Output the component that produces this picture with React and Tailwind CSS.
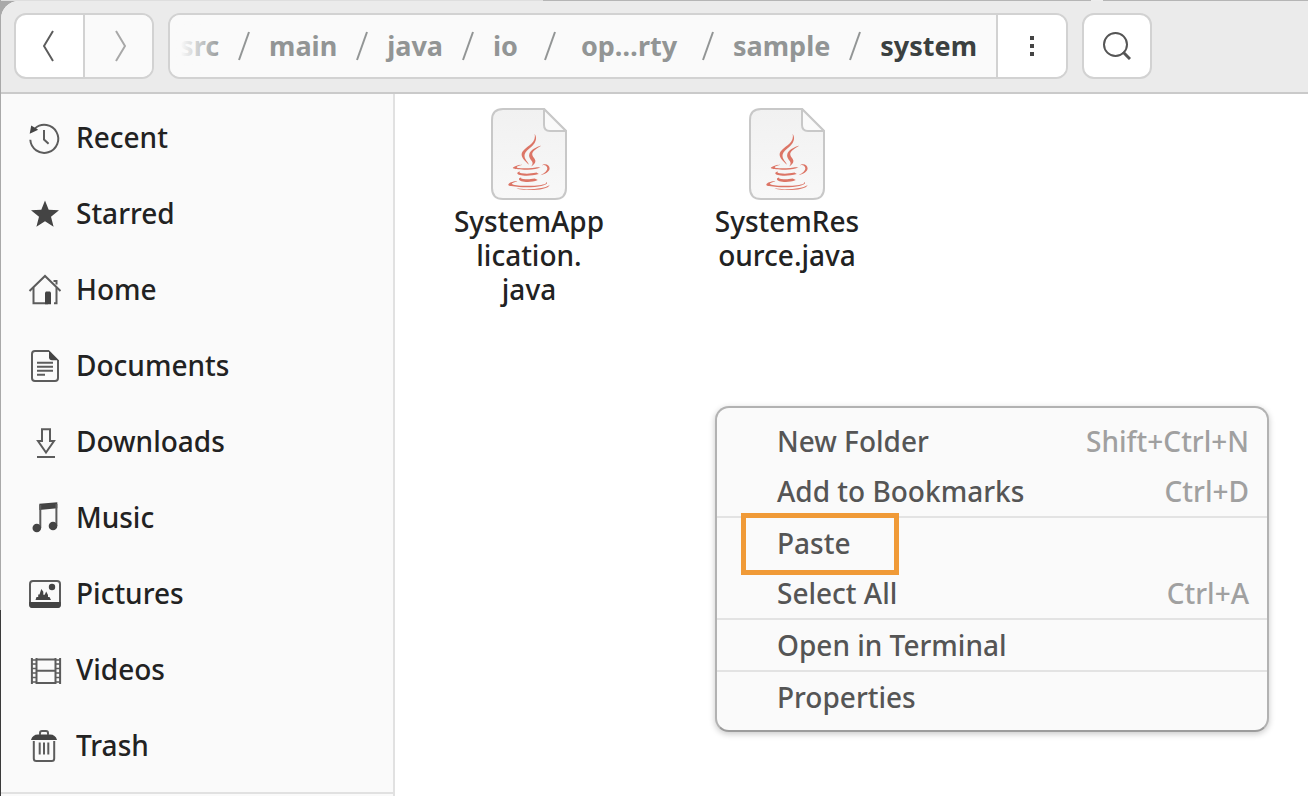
import { FaJava } from "react-icons/fa";

function Icon({ children }) {
  return (
    <svg viewBox="0 0 34 32" className="h-8 w-[34px] shrink-0 overflow-visible" fill="none" stroke="#5c5c5c" strokeWidth="2" aria-hidden="true">
      {children}
    </svg>
  );
}

const RecentIcon = () => (
  <Icon>
    <path d="M2.3 17.8A14 14 0 1 0 7 6.4" />
    <path d="M16 8v9.5l4.6 4.2" />
    <path d="M3.2 3.600l7 4.200-8.500 3.900z" fill="#444" stroke="none" />
  </Icon>
);

const StarredIcon = () => (
  <Icon>
    <path d="M17 2.6l3.7 9.2 10.3.5-8 6.4 2.6 10L17 23.2l-8.600 5.500 2.600-10-8-6.400 10.300-.5z" fill="#444" stroke="none" />
  </Icon>
);

const HomeIcon = () => (
  <Icon>
    <path d="M1.500 17L17 2l15.500 15" />
    <path d="M5.500 13.500v15.800H20M28.500 13.500v15.800h-2.500" />
    <path d="M17 18.500l1-1h4l1 1v11.700h-6z" fill="#444" stroke="none" />
    <path d="M25.500 7h3v3.500" />
  </Icon>
);

const DocumentsIcon = () => (
  <Icon>
    <path d="M21 1H7Q4 1 4 4v24q0 3 3 3h20q3 0 3-3V10" />
    <path d="M21 .2L30.900 10.200H24q-3 0-3-3z" fill="#444" stroke="none" />
    <path d="M9 12.700h16M9 16.700h16M9 20.700h16M9 24.700h8" />
  </Icon>
);

const DownloadsIcon = () => (
  <Icon>
    <path d="M14 3.200h8V15h4L18 26.500 10 15h4z" />
    <path d="M9 31h18" />
  </Icon>
);

const MusicIcon = () => (
  <Icon>
    <path d="M11.300 1.800L29.300.300v6L11.300 8z" fill="#444" stroke="none" />
    <path d="M12.300 3v23M28.400 2v22" />
    <circle cx="8.800" cy="26" r="4.300" fill="#444" stroke="none" />
    <circle cx="25" cy="24" r="4.300" fill="#444" stroke="none" />
  </Icon>
);

const PicturesIcon = () => (
  <Icon>
    <rect x="2" y="3" width="30" height="26" rx="3" />
    <path d="M1.200 24h31.600v3q0 3-3 3H4.200q-3 0-3-3z" fill="#444" stroke="none" />
    <circle cx="24" cy="9" r="3.200" fill="#444" stroke="none" />
    <path d="M7.500 22l1-3h1.700v-2.500h1.300L13.300 11l2 2.700v3h1.400l1.500-3.200 1.800 3.500v2h1.500l1.500 3z" fill="#444" stroke="none" />
  </Icon>
);

const VideosIcon = () => (
  <Icon>
    <path d="M3.900 4v26M32.100 4v26M8.500 4v26M27.500 4v26" />
    <path d="M8.500 5.500h19M8.500 16.700h19M8.500 29h19" />
    <path d="M3.900 6h4.600M3.900 10h4.600M3.900 14.500h4.600M3.900 19h4.600M3.900 23.500h4.600M3.900 28h4.600M27.500 6h4.600M27.500 10h4.600M27.500 14.500h4.600M27.500 19h4.600M27.500 23.500h4.600M27.500 28h4.600" strokeWidth="1.400" />
  </Icon>
);

const TrashIcon = () => (
  <Icon>
    <path d="M5.800 11v17.500q0 2.500 2.500 2.500h15.400q2.500 0 2.500-2.500V11" />
    <path d="M3 10q1.500-5.500 7-5.500h12q5.500 0 7 5.500z" fill="#444" stroke="none" />
    <path d="M12 5V3q0-2 2-2h4q2 0 2 2v2" />
    <path d="M11.700 12.500v12M16 12.500v12M20.300 12.500v12" />
  </Icon>
);

const places = [
  ["Recent", RecentIcon],
  ["Starred", StarredIcon],
  ["Home", HomeIcon],
  ["Documents", DocumentsIcon],
  ["Downloads", DownloadsIcon],
  ["Music", MusicIcon],
  ["Pictures", PicturesIcon],
  ["Videos", VideosIcon],
  ["Trash", TrashIcon],
];

const crumbs = [
  { name: "src" },
  { name: "main" },
  { name: "java" },
  { name: "io" },
  { name: "op…rty", truncated: true },
  { name: "sample" },
];

const files = ["SystemApp\nlication.\njava", "SystemRes\nource.java"];

const menuGroups = [
  [["New Folder", "Shift+Ctrl+N"], ["Add to Bookmarks", "Ctrl+D"]],
  [["Paste", ""], ["Select All", "Ctrl+A"]],
  [["Open in Terminal", ""]],
  [["Properties", ""]],
];

function Slash() {
  return (
    <svg viewBox="0 0 12 30" className="h-[30px] w-3 shrink-0" fill="none" stroke="#929595" strokeWidth="2" aria-hidden="true">
      <path d="M11 1L1 29" />
    </svg>
  );
}

function Header() {
  return (
    <header className="flex gap-[14px] border-b-2 border-[#cacaca] bg-[#ebebeb] pt-3 pr-3 pb-[13px] pl-[13px]">
      <div className="flex h-[66px] w-[140px] shrink-0 overflow-hidden rounded-xl border-2 border-[#d2d2d2] bg-white">
        <button type="button" aria-label="Back" className="flex flex-1 items-center justify-center border-r-2 border-[#d2d2d2]">
          <svg viewBox="0 0 14 32" className="h-8 w-[14px]" fill="none" stroke="#5c5c5c" strokeWidth="2">
            <path d="M10 1L1 16l9 15" />
          </svg>
        </button>
        <button type="button" aria-label="Forward" className="flex flex-1 items-center justify-center bg-[#fafafa]">
          <svg viewBox="0 0 14 32" className="h-8 w-[14px]" fill="none" stroke="#a8a8a8" strokeWidth="2">
            <path d="M4 1l9 15-9 15" />
          </svg>
        </button>
      </div>
      <div className="flex h-[66px] w-[900px] shrink-0 overflow-hidden rounded-xl border-2 border-[#d2d2d2] bg-[#fafafa]">
        <nav aria-label="Path" className="relative flex min-w-0 flex-1 items-center justify-end gap-[19px] overflow-hidden pr-[19px] text-[27px] font-bold text-[#929595]">
          {crumbs.map(({ name, truncated }) => (
            <span key={name} className="flex shrink-0 items-center gap-[19px]">
              <button type="button" className={truncated ? "min-w-[108px]" : "min-w-8 text-left"}>{name}</button>
              <Slash />
            </span>
          ))}
          <button type="button" className="text-[#3b4040]">system</button>
          <span className="absolute inset-y-0 left-0 w-[52px] bg-linear-to-r from-[#fafafa] from-20% to-transparent" />
        </nav>
        <button type="button" aria-label="Path options" className="flex w-[70px] items-center justify-center border-l-2 border-[#d2d2d2] bg-white">
          <svg viewBox="0 0 4 20" className="h-5 w-1" fill="#444">
            <path d="M0 0h4v4H0zM0 8h4v4H0zM0 16h4v4H0z" />
          </svg>
        </button>
      </div>
      <button type="button" aria-label="Search" className="flex h-[66px] w-[70px] shrink-0 items-center justify-center rounded-xl border-2 border-[#d2d2d2] bg-white">
        <svg viewBox="0 0 28 28" className="size-7" fill="none" stroke="#555" strokeWidth="2">
          <circle cx="12.500" cy="12.500" r="11.500" />
          <path d="M20 20l7 7" strokeWidth="3" />
        </svg>
      </button>
    </header>
  );
}

function JavaFile({ label, id }) {
  return (
    <li className="flex w-[258px] flex-col items-center">
      <span className="relative flex h-[92px] w-[76px] items-end justify-center pb-[10px]">
        <svg viewBox="0 0 76 92" className="absolute inset-0 size-full" stroke="#c8c8c8" strokeWidth="2" strokeLinejoin="round" aria-hidden="true">
          <linearGradient id={id} x1="0" y1="0" x2="0" y2="1">
            <stop offset="0" stopColor="#f1f1f1" />
            <stop offset="1" stopColor="#f8f8f8" />
          </linearGradient>
          <path d="M12 1H53L75 23V80q0 11-11 11H12Q1 91 1 80V12Q1 1 12 1z" fill={`url(#${id})`} />
          <path d="M53 1V17q0 6 6 6H75z" fill="#fafafa" />
        </svg>
        <FaJava className="relative size-14 text-[#dc7566]" aria-hidden="true" />
      </span>
      <span className="mt-1 text-center text-[28px] leading-[34px] font-medium whitespace-pre-line text-[#222]">{label}</span>
    </li>
  );
}

function ContextMenu() {
  return (
    <div role="menu" className="absolute top-[312px] left-[320px] w-[554px] rounded-[14px] border-2 border-[#b2b2b2] border-b-[#9c9c9c] bg-[#fafafa] py-2 text-[28px] font-medium text-[#555] shadow-[0_2px_6px_rgba(0,0,0,0.22)]">
      {menuGroups.map((group, index) => (
        <div key={index} role="group" className="border-[#e3e3e3] not-first:border-t-2">
          {group.map(([label, keys]) => (
            <button key={label} type="button" role="menuitem" className="relative flex h-[50px] w-full items-center justify-between pr-[18px] pl-[60px]">
              <span>{label}</span>
              <span className="text-[#a0a0a0]">{keys}</span>
              {label === "Paste" && <span className="absolute -top-[5px] left-6 h-[62px] w-[158px] border-5 border-[#f09a37]" />}
            </button>
          ))}
        </div>
      ))}
    </div>
  );
}

export default function App() {
  return (
    <div className="flex min-h-screen flex-col bg-[linear-gradient(to_bottom,#a9a9a9_610px,#3a3a3a_610px)] pl-px font-['Noto_Sans',sans-serif]">
      <div className="flex h-px bg-[#dedede]">
        <span className="w-[542px]" />
        <span className="w-[548px] bg-[#b5b5b5]" />
        <span className="w-3 bg-[#ededed]" />
        <span className="flex-1 bg-[#b5b5b5]" />
      </div>
      <div className="flex flex-1 flex-col overflow-hidden rounded-tl-[18px] bg-white">
        <Header />
        <div className="flex flex-1">
          <aside className="w-[394px] shrink-0 border-r-2 border-[#e1e1e1] bg-[#fafafa] pt-[6px]">
            <nav aria-label="Places" className="border-b-2 border-[#e1e1e1] pb-2">
              {places.map(([name, PlaceIcon]) => (
                <a key={name} href="#" className="flex h-[76px] items-center gap-[14px] pl-[27px] text-[28px] font-medium text-[#222]">
                  <PlaceIcon />
                  <span className="pb-[2px]">{name}</span>
                </a>
              ))}
            </nav>
          </aside>
          <main className="relative flex-1">
            <ul className="flex flex-wrap pt-[14px] pl-[5px]">
              {files.map((label, index) => (
                <JavaFile key={label} label={label} id={`sheet-${index}`} />
              ))}
            </ul>
            <ContextMenu />
          </main>
        </div>
      </div>
    </div>
  );
}
